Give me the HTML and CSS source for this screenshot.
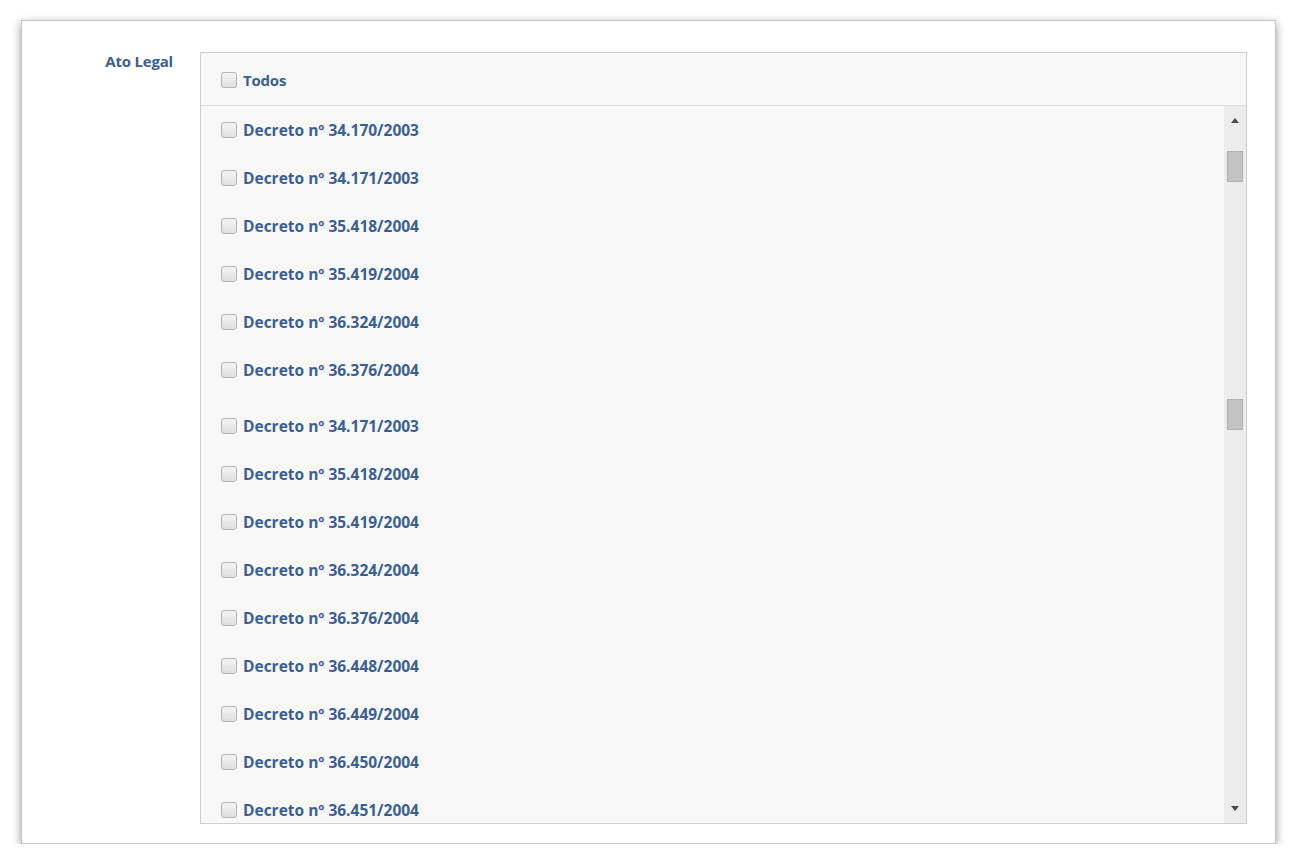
FILE: index.html
```html
<!DOCTYPE html>
<html>
<head>
    <link rel="stylesheet" href="styles.css">
</head>
<body>
    <div class="card">
        <div class="field">
            <label class="field-label">Ato Legal</label>
            <div class="picker">
                <div class="picker-head">
                    <span class="check"></span>
                    <span class="head-text">Todos</span>
                </div>
                <div class="picker-body">
                    <div class="items">
                        <div class="item"><span class="check"></span><span class="item-text">Decreto nº 34.170/2003</span></div>
                        <div class="item"><span class="check"></span><span class="item-text">Decreto nº 34.171/2003</span></div>
                        <div class="item"><span class="check"></span><span class="item-text">Decreto nº 35.418/2004</span></div>
                        <div class="item"><span class="check"></span><span class="item-text">Decreto nº 35.419/2004</span></div>
                        <div class="item"><span class="check"></span><span class="item-text">Decreto nº 36.324/2004</span></div>
                        <div class="item"><span class="check"></span><span class="item-text">Decreto nº 36.376/2004</span></div>
                        <div class="item gap"><span class="check"></span><span class="item-text">Decreto nº 34.171/2003</span></div>
                        <div class="item"><span class="check"></span><span class="item-text">Decreto nº 35.418/2004</span></div>
                        <div class="item"><span class="check"></span><span class="item-text">Decreto nº 35.419/2004</span></div>
                        <div class="item"><span class="check"></span><span class="item-text">Decreto nº 36.324/2004</span></div>
                        <div class="item"><span class="check"></span><span class="item-text">Decreto nº 36.376/2004</span></div>
                        <div class="item"><span class="check"></span><span class="item-text">Decreto nº 36.448/2004</span></div>
                        <div class="item"><span class="check"></span><span class="item-text">Decreto nº 36.449/2004</span></div>
                        <div class="item"><span class="check"></span><span class="item-text">Decreto nº 36.450/2004</span></div>
                        <div class="item"><span class="check"></span><span class="item-text">Decreto nº 36.451/2004</span></div>
                    </div>
                    <div class="scrollbar">
                        <div class="arrow arrow-up"></div>
                        <div class="thumb thumb-top"></div>
                        <div class="thumb thumb-mid"></div>
                        <div class="track-fill"></div>
                        <div class="arrow arrow-down"></div>
                    </div>
                </div>
            </div>
        </div>
    </div>
</body>
</html>
```

FILE: styles.css
```css
body {
    margin: 0;
    padding: 20px 21px 0 21px;
    background: #ffffff;
    font-family: "Open Sans", "Noto Sans", Arial, sans-serif;
}
.card {
    width: 1253px;
    height: 822px;
    border: 1px solid #c4c4c4;
    background: #ffffff;
    box-shadow: 0 3px 9px rgba(0, 0, 0, 0.4);
}
.field {
    display: flex;
    padding: 31px 28px 0 0;
}
.field-label {
    width: 151px;
    text-align: right;
    padding-right: 27px;
    font-size: 15px;
    font-weight: 700;
    color: #3b5f8f;
    line-height: 18px;
    letter-spacing: -0.2px;
}
.picker {
    flex: 1;
    height: 770px;
    border: 1px solid #cfcfcf;
    background: #f8f8f8;
    display: flex;
    flex-direction: column;
    overflow: hidden;
}
.picker-head {
    height: 53px;
    border-bottom: 1px solid #dcdcdc;
    display: flex;
    align-items: center;
    padding-left: 20px;
    padding-top: 2px;
    box-sizing: border-box;
}
.picker-body {
    flex: 1;
    display: flex;
    overflow: hidden;
}
.items {
    flex: 1;
    overflow: hidden;
}
.item {
    height: 48px;
    display: flex;
    align-items: center;
    padding-left: 20px;
}
.item.gap {
    margin-top: 8px;
}
.check {
    width: 14px;
    height: 14px;
    border: 1px solid #b4b4b4;
    border-radius: 3px;
    background: linear-gradient(#f4f4f4, #dedede);
    margin-right: 6px;
    flex-shrink: 0;
}
.head-text {
    font-size: 15px;
    font-weight: 700;
    color: #3b5f8f;
    letter-spacing: -0.2px;
}
.item-text {
    font-size: 15.5px;
    font-weight: 700;
    color: #3b5f8f;
}
.scrollbar {
    width: 22px;
    background: #ececec;
    display: flex;
    flex-direction: column;
    align-items: center;
}
.arrow {
    width: 0;
    height: 0;
    border-left: 4px solid transparent;
    border-right: 4px solid transparent;
}
.arrow-up {
    margin-top: 12px;
    border-bottom: 5px solid #4a4a4a;
}
.arrow-down {
    margin-bottom: 12px;
    border-top: 5px solid #4a4a4a;
}
.thumb {
    width: 16px;
    height: 31px;
    background: #c3c3c3;
    border: 1px solid #b0b0b0;
    box-sizing: border-box;
}
.thumb-top {
    margin-top: 28px;
}
.thumb-mid {
    margin-top: 217px;
}
.track-fill {
    flex: 1;
}
```
